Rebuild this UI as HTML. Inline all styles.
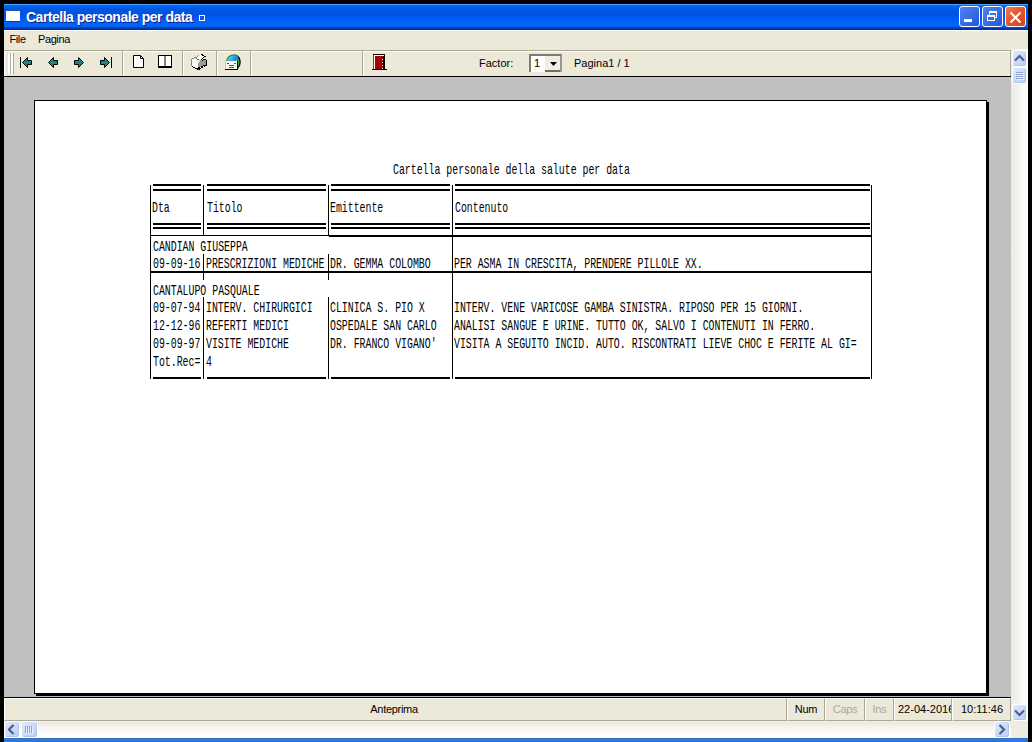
<!DOCTYPE html>
<html><head><meta charset="utf-8">
<style>
*{margin:0;padding:0;box-sizing:border-box}
html,body{width:1032px;height:742px;overflow:hidden;background:#000;position:relative;font-family:"Liberation Sans",sans-serif}
.a{position:absolute}
#title{left:4px;top:4px;width:1024px;height:26px;
 background:linear-gradient(to bottom,#4a9cff 0px,#4a9cff 1px,#0a6df6 1px,#0062f0 3px,#0056e2 5px,#0053e0 11px,#0058f4 14px,#0063fa 17px,#0066f7 22px,#0055e0 23px,#0040c0 24px,#0030a8 25px,#0030a8 26px)}
#ttext{left:26px;top:9px;color:#fff;font-weight:bold;font-size:14px;letter-spacing:-0.5px;line-height:16px;white-space:nowrap;text-shadow:1px 1px 0 #0a1e8c}
.wbtn{top:6px;width:21px;height:21px;border:1px solid #fff;border-radius:3px}
#menubar{left:4px;top:30px;width:1024px;height:20px;background:#ece9d8;border-top:1px solid #fff}
.menu{top:33px;font-size:11px;line-height:13px;color:#000;letter-spacing:-0.4px}
#toolbar{left:4px;top:50px;width:1007px;height:27px;background:#ece9d8;border-top:1px solid #aca899;border-bottom:1px solid #000}
#tbwhite{left:4px;top:51px;width:1006px;height:1px;background:#fff}
.sep{top:51px;width:2px;height:25px;border-left:1px solid #aca899;border-right:1px solid #fff}
#preview{left:4px;top:77px;width:1007px;height:621px;background:#c0c0c0;border-bottom:1px solid #000}
#page{left:34px;top:100px;width:953px;height:594px;background:#fff;border:1px solid #000}
#shadowR{left:987px;top:102px;width:2px;height:594px;background:#000}
#shadowB{left:36px;top:694px;width:953px;height:2px;background:#000}
#vscroll{left:1011px;top:49px;width:17px;height:672px;background:linear-gradient(to right,#eeede5,#f3f1ec 40%,#fdfdfa 80%,#fefefb)}
#status{left:4px;top:698px;width:1007px;height:23px;background:#ece9d8}
.panel{top:698px;height:23px;border-top:1px solid #fff;border-left:1px solid #fff;border-right:1px solid #aca899;border-bottom:1px solid #aca899;font-size:11px;line-height:13px;padding-top:4px;letter-spacing:-0.3px;white-space:nowrap;overflow:hidden}
#hscroll{left:4px;top:721px;width:1007px;height:17px;background:linear-gradient(to bottom,#f3f1ea,#ebe8de 2px,#f4f3ee 6px,#fbfbf8 11px,#fefefb)}
#corner{left:1011px;top:721px;width:17px;height:17px;background:#efede3}
#bframe{left:4px;top:738px;width:1024px;height:4px;background:linear-gradient(to bottom,#3070b8 0,#3070b8 1px,#3a85e0 1px,#2a78e8 2px,#2674e6)}
.sbtn{width:15px;height:15px;border:1px solid #fff;border-radius:3px;background:linear-gradient(135deg,#dfe9fd,#cbdafc 50%,#bccff8);box-shadow:inset -1px -1px 0 #b0c3ea}
.t{position:absolute;font-family:"Liberation Mono",monospace;font-size:15px;line-height:15px;color:#000;white-space:pre;transform:scaleX(0.6578);transform-origin:0 0}
.hl{position:absolute;background:#000}
</style></head><body>
<div id="title" class="a"></div>
<div class="a" style="left:6px;top:10px;width:14px;height:12px;background:#fff;border-top:1px solid #2a5aa8;border-bottom:1px solid #0a3a9a"></div>
<div id="ttext" class="a">Cartella personale per data</div>
<div class="a" style="left:199px;top:15px;width:6px;height:6px;border:1px solid #fff"></div>
<div class="a wbtn" style="left:959px;background:linear-gradient(135deg,#4f83f5,#2457d6)"><div class="a" style="left:4px;top:12px;width:8px;height:3px;background:#fff"></div></div>
<div class="a wbtn" style="left:982px;background:linear-gradient(135deg,#4f83f5,#2457d6)"><div class="a" style="left:6px;top:4px;width:8px;height:7px;border:1px solid #fff;border-top-width:2px"></div><div class="a" style="left:4px;top:8px;width:8px;height:6px;border:1px solid #fff;border-top-width:2px;background:#3a6ae6"></div></div>
<div class="a wbtn" style="left:1005px;background:linear-gradient(135deg,#ee7c5e 0%,#e4582f 45%,#d04420 100%)"><svg class="a" style="left:3px;top:4px" width="13" height="13"><path d="M1.5 1.5L11.5 11.5M11.5 1.5L1.5 11.5" stroke="#fff" stroke-width="2"/></svg></div>

<div id="menubar" class="a"></div>
<div class="a menu" style="left:9.5px">File</div>
<div class="a menu" style="left:38px">Pagina</div>

<div id="toolbar" class="a"></div>
<div id="tbwhite" class="a"></div>
<div class="a" style="left:1010px;top:50px;width:1px;height:26px;background:#aca899"></div>
<div class="a" style="left:4px;top:51px;width:1px;height:25px;background:#fff"></div>
<div class="a" style="left:8px;top:53px;width:2px;height:21px;background:#fff"></div>
<div class="a" style="left:10px;top:53px;width:1px;height:21px;background:#aca899"></div>
<div class="a" style="left:11px;top:53px;width:2px;height:21px;background:#fff"></div>
<div class="a" style="left:13px;top:53px;width:1px;height:21px;background:#aca899"></div>

<svg class="a" style="left:0;top:0" width="1032" height="80">
 <g fill="#1e8282" stroke="#000" stroke-width="1">
  <rect x="20" y="57" width="1" height="11" fill="#000" stroke="none"/>
  <path d="M22.5 62.5L27.5 57.5V60.5H31.5V64.5H27.5V67.5Z"/>
  <path d="M48.5 62.5L53.5 57.5V60.5H57.5V64.5H53.5V67.5Z"/>
  <path d="M83.5 62.5L78.5 57.5V60.5H74.5V64.5H78.5V67.5Z"/>
  <path d="M109.5 62.5L104.5 57.5V60.5H100.5V64.5H104.5V67.5Z"/>
  <rect x="111" y="57" width="1" height="11" fill="#000" stroke="none"/>
 </g>
 <path d="M133.5 55.5H140.5L143.5 58.5V67.5H133.5Z" fill="#fff" stroke="#000"/>
 <path d="M140.5 55.5V58.5H143.5" fill="none" stroke="#000"/>
 <rect x="158.5" y="55.5" width="13" height="11" fill="#fff" stroke="#000"/>
 <rect x="158" y="66" width="14" height="2" fill="#000"/>
 <rect x="164" y="56" width="2" height="10" fill="#808080"/>
 <!-- printer -->
<rect x="201" y="54" width="2" height="1" fill="#000"/>
<rect x="198" y="55" width="1" height="1" fill="#8a8878"/>
<rect x="199" y="55" width="3" height="1" fill="#fcfcfc"/>
<rect x="202" y="55" width="2" height="1" fill="#000"/>
<rect x="197" y="56" width="1" height="1" fill="#8a8878"/>
<rect x="198" y="56" width="6" height="1" fill="#fcfcfc"/>
<rect x="204" y="56" width="2" height="1" fill="#000"/>
<rect x="194" y="57" width="3" height="1" fill="#8a8878"/>
<rect x="197" y="57" width="6" height="1" fill="#fcfcfc"/>
<rect x="203" y="57" width="1" height="1" fill="#000"/>
<rect x="192" y="58" width="2" height="1" fill="#8a8878"/>
<rect x="194" y="58" width="1" height="1" fill="#fcfcfc"/>
<rect x="195" y="58" width="1" height="1" fill="#c8c8c0"/>
<rect x="196" y="58" width="1" height="1" fill="#8a8878"/>
<rect x="197" y="58" width="5" height="1" fill="#fcfcfc"/>
<rect x="202" y="58" width="1" height="1" fill="#000"/>
<rect x="191" y="59" width="1" height="1" fill="#8a8878"/>
<rect x="192" y="59" width="5" height="1" fill="#fcfcfc"/>
<rect x="197" y="59" width="2" height="1" fill="#5a5a50"/>
<rect x="199" y="59" width="2" height="1" fill="#fcfcfc"/>
<rect x="201" y="59" width="1" height="1" fill="#000"/>
<rect x="202" y="59" width="1" height="1" fill="#fcfcfc"/>
<rect x="203" y="59" width="3" height="1" fill="#000"/>
<rect x="191" y="60" width="1" height="1" fill="#8a8878"/>
<rect x="192" y="60" width="7" height="1" fill="#fcfcfc"/>
<rect x="199" y="60" width="1" height="1" fill="#d8d8d8"/>
<rect x="200" y="60" width="2" height="1" fill="#9a9a9a"/>
<rect x="202" y="60" width="1" height="1" fill="#000"/>
<rect x="203" y="60" width="3" height="1" fill="#9a9a9a"/>
<rect x="206" y="60" width="1" height="1" fill="#000"/>
<rect x="191" y="61" width="1" height="1" fill="#8a8878"/>
<rect x="192" y="61" width="7" height="1" fill="#fcfcfc"/>
<rect x="199" y="61" width="1" height="1" fill="#d8d8d8"/>
<rect x="200" y="61" width="6" height="1" fill="#9a9a9a"/>
<rect x="206" y="61" width="1" height="1" fill="#000"/>
<rect x="191" y="62" width="1" height="1" fill="#8a8878"/>
<rect x="192" y="62" width="6" height="1" fill="#fcfcfc"/>
<rect x="198" y="62" width="1" height="1" fill="#d8d8d8"/>
<rect x="199" y="62" width="7" height="1" fill="#9a9a9a"/>
<rect x="206" y="62" width="1" height="1" fill="#000"/>
<rect x="191" y="63" width="1" height="1" fill="#8a8878"/>
<rect x="192" y="63" width="6" height="1" fill="#fcfcfc"/>
<rect x="198" y="63" width="8" height="1" fill="#9a9a9a"/>
<rect x="206" y="63" width="1" height="1" fill="#000"/>
<rect x="191" y="64" width="1" height="1" fill="#8a8878"/>
<rect x="192" y="64" width="6" height="1" fill="#fcfcfc"/>
<rect x="198" y="64" width="8" height="1" fill="#9a9a9a"/>
<rect x="206" y="64" width="1" height="1" fill="#000"/>
<rect x="191" y="65" width="1" height="1" fill="#8a8878"/>
<rect x="192" y="65" width="6" height="1" fill="#fcfcfc"/>
<rect x="198" y="65" width="5" height="1" fill="#9a9a9a"/>
<rect x="203" y="65" width="4" height="1" fill="#000"/>
<rect x="192" y="66" width="1" height="1" fill="#000"/>
<rect x="193" y="66" width="5" height="1" fill="#fcfcfc"/>
<rect x="198" y="66" width="3" height="1" fill="#9a9a9a"/>
<rect x="201" y="66" width="2" height="1" fill="#000"/>
<rect x="203" y="66" width="1" height="1" fill="#fcfcfc"/>
<rect x="204" y="66" width="1" height="1" fill="#000"/>
<rect x="193" y="67" width="2" height="1" fill="#000"/>
<rect x="195" y="67" width="3" height="1" fill="#fcfcfc"/>
<rect x="198" y="67" width="2" height="1" fill="#000"/>
<rect x="200" y="67" width="1" height="1" fill="#fcfcfc"/>
<rect x="201" y="67" width="2" height="1" fill="#000"/>
<rect x="195" y="68" width="6" height="1" fill="#000"/>
<rect x="197" y="69" width="3" height="1" fill="#000"/>
<rect x="373" y="54" width="12" height="1" fill="#000"/>
<rect x="373" y="55" width="1" height="1" fill="#505050"/>
<rect x="374" y="55" width="10" height="1" fill="#fff"/>
<rect x="384" y="55" width="1" height="1" fill="#000"/>
<rect x="373" y="56" width="1" height="1" fill="#505050"/>
<rect x="374" y="56" width="1" height="1" fill="#fff"/>
<rect x="375" y="56" width="8" height="1" fill="#a80000"/>
<rect x="383" y="56" width="2" height="1" fill="#000"/>
<rect x="373" y="57" width="1" height="1" fill="#505050"/>
<rect x="374" y="57" width="1" height="1" fill="#fff"/>
<rect x="375" y="57" width="6" height="1" fill="#a80000"/>
<rect x="381" y="57" width="1" height="1" fill="#7a0000"/>
<rect x="382" y="57" width="1" height="1" fill="#a80000"/>
<rect x="383" y="57" width="2" height="1" fill="#000"/>
<rect x="373" y="58" width="1" height="1" fill="#505050"/>
<rect x="374" y="58" width="1" height="1" fill="#fff"/>
<rect x="375" y="58" width="8" height="1" fill="#a80000"/>
<rect x="383" y="58" width="2" height="1" fill="#000"/>
<rect x="373" y="59" width="1" height="1" fill="#505050"/>
<rect x="374" y="59" width="1" height="1" fill="#fff"/>
<rect x="375" y="59" width="7" height="1" fill="#a80000"/>
<rect x="382" y="59" width="1" height="1" fill="#fff"/>
<rect x="383" y="59" width="2" height="1" fill="#000"/>
<rect x="373" y="60" width="1" height="1" fill="#505050"/>
<rect x="374" y="60" width="1" height="1" fill="#fff"/>
<rect x="375" y="60" width="5" height="1" fill="#a80000"/>
<rect x="380" y="60" width="1" height="1" fill="#7a0000"/>
<rect x="381" y="60" width="2" height="1" fill="#a80000"/>
<rect x="383" y="60" width="2" height="1" fill="#000"/>
<rect x="373" y="61" width="1" height="1" fill="#505050"/>
<rect x="374" y="61" width="1" height="1" fill="#fff"/>
<rect x="375" y="61" width="8" height="1" fill="#a80000"/>
<rect x="383" y="61" width="2" height="1" fill="#000"/>
<rect x="373" y="62" width="1" height="1" fill="#505050"/>
<rect x="374" y="62" width="1" height="1" fill="#fff"/>
<rect x="375" y="62" width="7" height="1" fill="#a80000"/>
<rect x="382" y="62" width="1" height="1" fill="#fff"/>
<rect x="383" y="62" width="2" height="1" fill="#000"/>
<rect x="373" y="63" width="1" height="1" fill="#505050"/>
<rect x="374" y="63" width="1" height="1" fill="#fff"/>
<rect x="375" y="63" width="8" height="1" fill="#a80000"/>
<rect x="383" y="63" width="2" height="1" fill="#000"/>
<rect x="373" y="64" width="1" height="1" fill="#505050"/>
<rect x="374" y="64" width="1" height="1" fill="#fff"/>
<rect x="375" y="64" width="2" height="1" fill="#a80000"/>
<rect x="377" y="64" width="1" height="1" fill="#7a0000"/>
<rect x="378" y="64" width="5" height="1" fill="#a80000"/>
<rect x="383" y="64" width="2" height="1" fill="#000"/>
<rect x="373" y="65" width="1" height="1" fill="#505050"/>
<rect x="374" y="65" width="1" height="1" fill="#fff"/>
<rect x="375" y="65" width="7" height="1" fill="#a80000"/>
<rect x="382" y="65" width="1" height="1" fill="#fff"/>
<rect x="383" y="65" width="2" height="1" fill="#000"/>
<rect x="373" y="66" width="1" height="1" fill="#505050"/>
<rect x="374" y="66" width="1" height="1" fill="#fff"/>
<rect x="375" y="66" width="8" height="1" fill="#a80000"/>
<rect x="383" y="66" width="2" height="1" fill="#000"/>
<rect x="373" y="67" width="1" height="1" fill="#505050"/>
<rect x="374" y="67" width="1" height="1" fill="#fff"/>
<rect x="375" y="67" width="8" height="1" fill="#a80000"/>
<rect x="383" y="67" width="2" height="1" fill="#000"/>
<rect x="373" y="68" width="1" height="1" fill="#505050"/>
<rect x="374" y="68" width="1" height="1" fill="#fff"/>
<rect x="375" y="68" width="7" height="1" fill="#a80000"/>
<rect x="382" y="68" width="1" height="1" fill="#fff"/>
<rect x="383" y="68" width="2" height="1" fill="#000"/>
<rect x="372" y="69" width="15" height="1" fill="#000"/>
 <defs><linearGradient id="gg" x1="0" y1="0" x2="1" y2="0.6"><stop offset="0" stop-color="#8ee08e"/><stop offset="0.3" stop-color="#3cc8f0"/><stop offset="0.7" stop-color="#2a70e8"/><stop offset="1" stop-color="#1a3cc0"/></linearGradient></defs>
 <path d="M226.5 63 C226.5 53 240 52.5 240 61 L240 64 L237 68 H227Z" fill="url(#gg)"/>
 <path d="M226.5 62 C227 55 234 53.5 238 56" fill="none" stroke="#2a8a2a" stroke-width="1.2"/>
 <path d="M235.5 58.5 C239.5 58 240.5 62 239.5 66 L237 68.5 H236 Z" fill="#3aa83a"/>
 <path d="M238 56.5 C240.5 58.5 240.5 63 239.5 65.5 L237.5 68.5" fill="none" stroke="#000" stroke-width="1.2"/>
 <rect x="225" y="61" width="12" height="8" fill="#f8f8f0"/>
 <rect x="225" y="61" width="1" height="8" fill="#c8c8b8"/>
 <rect x="237" y="61" width="1" height="9" fill="#000"/>
 <rect x="225" y="69" width="13" height="1" fill="#000"/>
 <rect x="227" y="63" width="2" height="1" fill="#2040a0"/><rect x="234" y="63" width="2" height="1" fill="#a04030"/>
 <rect x="229" y="65" width="5" height="1" fill="#505050"/><rect x="229" y="67" width="5" height="1" fill="#505050"/>
</svg>
<div class="a sep" style="left:122px"></div>
<div class="a sep" style="left:182px"></div>
<div class="a sep" style="left:216px"></div>
<div class="a sep" style="left:250px"></div>
<div class="a sep" style="left:362px"></div>
<div class="a" style="left:479px;top:57px;font-size:11px;line-height:13px">Factor:</div>
<div class="a" style="left:529px;top:54px;width:33px;height:18px;background:#fff;border-top:2px solid #7a7a72;border-left:2px solid #7a7a72;border-right:2px solid #9a9890"></div>
<div class="a" style="left:534px;top:57px;font-size:11px;line-height:13px">1</div>
<div class="a" style="left:545px;top:56px;width:15px;height:16px;background:#efede4;border-bottom:2px solid #716f64"></div>
<svg class="a" style="left:550px;top:62px" width="8" height="5"><path d="M0 0H7L3.5 4Z" fill="#000"/></svg>
<div class="a" style="left:574px;top:57px;font-size:11px;line-height:13px">Pagina1 / 1</div>

<div id="preview" class="a"></div>
<div id="shadowR" class="a"></div>
<div id="shadowB" class="a"></div>
<div id="page" class="a"></div>

<div id="vscroll" class="a"></div>
<div class="a sbtn" style="left:1012px;top:50px;height:17px"></div>
<svg class="a" style="left:1014px;top:54px" width="11" height="8"><path d="M1 6.5L5.5 2L10 6.5" fill="none" stroke="#4d6185" stroke-width="2.2"/></svg>
<div class="a sbtn" style="left:1012px;top:67px;height:17px"></div>
<svg class="a" style="left:1016px;top:72px" width="8" height="8"><g fill="#8da2d8"><rect x="0" y="0" width="7" height="1"/><rect x="0" y="2" width="7" height="1"/><rect x="0" y="4" width="7" height="1"/><rect x="0" y="6" width="7" height="1"/></g><g fill="#eef3ff"><rect x="1" y="1" width="7" height="1"/><rect x="1" y="3" width="7" height="1"/><rect x="1" y="5" width="7" height="1"/><rect x="1" y="7" width="7" height="1"/></g></svg>
<div id="status" class="a"></div>
<div class="a panel" style="left:4px;width:783px;text-align:center;padding-right:3px">Anteprima</div>
<div class="a panel" style="left:787px;width:38px;text-align:center">Num</div>
<div class="a panel" style="left:825px;width:40px;text-align:center;color:#aca899">Caps</div>
<div class="a panel" style="left:865px;width:29px;text-align:center;color:#aca899">Ins</div>
<div class="a panel" style="left:894px;width:58px;padding-left:3px;letter-spacing:0">22-04-2016</div>
<div class="a panel" style="left:952px;width:59px;padding-left:8px;letter-spacing:0">10:11:46</div>

<div id="hscroll" class="a"></div>
<div class="a sbtn" style="left:4px;top:721px;width:16px;height:17px"></div>
<svg class="a" style="left:7px;top:724px" width="9" height="11"><path d="M6.5 1L2 5.5L6.5 10" fill="none" stroke="#4d6185" stroke-width="2.2"/></svg>
<div class="a sbtn" style="left:21px;top:721px;width:17px;height:17px"></div>
<svg class="a" style="left:25px;top:726px" width="9" height="8"><g fill="#8da2d8"><rect x="0" y="0" width="1" height="7"/><rect x="2" y="0" width="1" height="7"/><rect x="4" y="0" width="1" height="7"/><rect x="6" y="0" width="1" height="7"/></g><g fill="#eef3ff"><rect x="1" y="1" width="1" height="7"/><rect x="3" y="1" width="1" height="7"/><rect x="5" y="1" width="1" height="7"/><rect x="7" y="1" width="1" height="7"/></g></svg>
<div class="a sbtn" style="left:994px;top:721px;width:16px;height:17px"></div>
<svg class="a" style="left:997px;top:724px" width="9" height="11"><path d="M2.5 1L7 5.5L2.5 10" fill="none" stroke="#4d6185" stroke-width="2.2"/></svg>
<div id="corner" class="a"></div>
<div class="a sbtn" style="left:1012px;top:704px;height:17px"></div>
<svg class="a" style="left:1014px;top:709px" width="11" height="8"><path d="M1 1.5L5.5 6L10 1.5" fill="none" stroke="#4d6185" stroke-width="2.2"/></svg>
<div id="bframe" class="a"></div>

<!-- report -->
<div class="hl" style="left:153px;top:184px;width:48px;height:2px"></div>
<div class="hl" style="left:153px;top:189px;width:48px;height:2px"></div>
<div class="hl" style="left:153px;top:223px;width:48px;height:2px"></div>
<div class="hl" style="left:153px;top:227px;width:48px;height:2px"></div>
<div class="hl" style="left:207px;top:184px;width:119px;height:2px"></div>
<div class="hl" style="left:207px;top:189px;width:119px;height:2px"></div>
<div class="hl" style="left:207px;top:223px;width:119px;height:2px"></div>
<div class="hl" style="left:207px;top:227px;width:119px;height:2px"></div>
<div class="hl" style="left:331px;top:184px;width:119px;height:2px"></div>
<div class="hl" style="left:331px;top:189px;width:119px;height:2px"></div>
<div class="hl" style="left:331px;top:223px;width:119px;height:2px"></div>
<div class="hl" style="left:331px;top:227px;width:119px;height:2px"></div>
<div class="hl" style="left:455px;top:184px;width:415px;height:2px"></div>
<div class="hl" style="left:455px;top:189px;width:415px;height:2px"></div>
<div class="hl" style="left:455px;top:223px;width:415px;height:2px"></div>
<div class="hl" style="left:455px;top:227px;width:415px;height:2px"></div>
<div class="hl" style="left:150px;top:185px;width:1px;height:194px"></div>
<div class="hl" style="left:871px;top:185px;width:1px;height:194px"></div>
<div class="hl" style="left:452px;top:185px;width:1px;height:194px"></div>
<div class="hl" style="left:203px;top:185px;width:1px;height:51px"></div>
<div class="hl" style="left:203px;top:254px;width:1px;height:26px"></div>
<div class="hl" style="left:203px;top:297px;width:1px;height:82px"></div>
<div class="hl" style="left:328px;top:185px;width:1px;height:51px"></div>
<div class="hl" style="left:328px;top:254px;width:1px;height:26px"></div>
<div class="hl" style="left:328px;top:297px;width:1px;height:82px"></div>
<div class="hl" style="left:150px;top:235px;width:722px;height:1px"></div>
<div class="hl" style="left:329px;top:236px;width:543px;height:1px"></div>
<div class="hl" style="left:150px;top:271px;width:722px;height:2px"></div>
<div class="hl" style="left:153px;top:377px;width:48px;height:2px"></div>
<div class="hl" style="left:207px;top:377px;width:119px;height:2px"></div>
<div class="hl" style="left:331px;top:377px;width:119px;height:2px"></div>
<div class="hl" style="left:455px;top:377px;width:415px;height:2px"></div>
<div class="t" style="left:393px;top:163px">Cartella personale della salute per data</div>
<div class="t" style="left:152px;top:201px">Dta</div>
<div class="t" style="left:207px;top:201px">Titolo</div>
<div class="t" style="left:330px;top:201px">Emittente</div>
<div class="t" style="left:455px;top:201px">Contenuto</div>
<div class="t" style="left:153px;top:240px">CANDIAN GIUSEPPA</div>
<div class="t" style="left:153px;top:257px">09-09-16</div>
<div class="t" style="left:206px;top:257px">PRESCRIZIONI MEDICHE</div>
<div class="t" style="left:330px;top:257px">DR. GEMMA COLOMBO</div>
<div class="t" style="left:454px;top:257px">PER ASMA IN CRESCITA, PRENDERE PILLOLE XX.</div>
<div class="t" style="left:153px;top:284px">CANTALUPO PASQUALE</div>
<div class="t" style="left:153px;top:301px">09-07-94</div>
<div class="t" style="left:206px;top:301px">INTERV. CHIRURGICI</div>
<div class="t" style="left:330px;top:301px">CLINICA S. PIO X</div>
<div class="t" style="left:454px;top:301px">INTERV. VENE VARICOSE GAMBA SINISTRA. RIPOSO PER 15 GIORNI.</div>
<div class="t" style="left:153px;top:319px">12-12-96</div>
<div class="t" style="left:206px;top:319px">REFERTI MEDICI</div>
<div class="t" style="left:330px;top:319px">OSPEDALE SAN CARLO</div>
<div class="t" style="left:454px;top:319px">ANALISI SANGUE E URINE. TUTTO OK, SALVO I CONTENUTI IN FERRO.</div>
<div class="t" style="left:153px;top:337px">09-09-97</div>
<div class="t" style="left:206px;top:337px">VISITE MEDICHE</div>
<div class="t" style="left:330px;top:337px">DR. FRANCO VIGANO'</div>
<div class="t" style="left:454px;top:337px">VISITA A SEGUITO INCID. AUTO. RISCONTRATI LIEVE CHOC E FERITE AL GI=</div>
<div class="t" style="left:153px;top:355px">Tot.Rec=</div>
<div class="t" style="left:206px;top:355px">4</div>
</body></html>
